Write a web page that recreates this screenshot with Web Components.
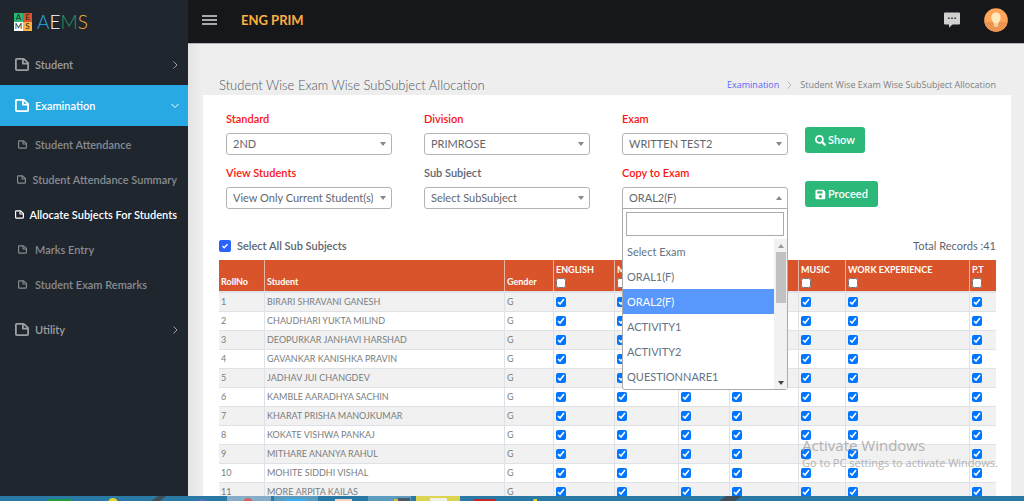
<!DOCTYPE html>
<html lang="en">
<head>
<meta charset="utf-8">
<meta name="viewport" content="width=device-width, initial-scale=1">
<title>AEMS - SubSubject Allocation</title>
<style>
  html, body { margin: 0; height: 100%; }
  body {
    --ui: Lato, "Open Sans", sans-serif;
    --side: #20262e;
    --brand: #28a9e3;
    --line: #dee2e6;
    font-family: var(--ui);
    font-size: 11px;
    color: #5c6570;
    overflow: hidden;
  }
</style>
</head>
<body>
<aems-app></aems-app>

<script>
const define = (name, html, setup) => customElements.define(name, class extends HTMLElement {
  constructor() {
    super();
    this.attachShadow({ mode: 'open' });
  }
  connectedCallback() {
    if (this.shadowRoot.childNodes.length) return;
    const t = document.createElement('template');
    t.innerHTML = typeof html === 'function' ? html(this) : html;
    this.shadowRoot.append(t.content.cloneNode(true));
    if (setup) setup(this);
  }
});

/* Document icon used across the menu */
define('aems-doc-icon', `
<style>
  :host { display: block; flex: none; }
  svg { display: block; width: 100%; height: 100%; }
</style>
<svg viewBox="0 0 14 13" fill="none" stroke="currentColor" stroke-width="1.800" stroke-linejoin="round">
  <path d="M1.800 .9h6.900l4.400 4v6.300q0 .9-.9.9H1.800q-.9 0-.9-.9V1.800q0-.9.9-.9z"/><path d="M7.900 1v4.700h5.200"/>
</svg>`);

define('aems-logo', `
<style>
  :host { display: flex; align-items: center; height: 44px; padding-left: 14px; gap: 5px; }
  .tiles { display: grid; grid-template-columns: 9px 9px; grid-auto-rows: 9px; line-height: 9px;
    font-size: 8px; text-align: center; color: #20262e; }
  .a { background: #2bb673; } .e { background: #d9542b; }
  .m { background: #fff; } .s { background: #fbb040; }
  .word { font-size: 19px; line-height: 22px; font-weight: 300; }
  .word span:nth-child(1) { color: #28a9e3; } .word span:nth-child(2) { color: #fff; }
  .word span:nth-child(3) { color: #1f9d63; } .word span:nth-child(4) { color: #fbb040; }
</style>
<div class="tiles" aria-hidden="true"><span class="a">A</span><span class="e">E</span><span class="m">M</span><span class="s">S</span></div>
<div class="word"><span>A</span><span>E</span><span>M</span><span>S</span></div>`);

define('aems-menu-item', el => `
<style>
  :host { display: block; color: #9b9fa4; }
  :host([active]) { background: var(--brand); color: #fff; }
  a { display: flex; align-items: center; height: 41px; padding: 0 9px 0 15px; color: inherit; text-decoration: none; font-size: 11px; font-weight: 600; }
  aems-doc-icon { width: 14px; height: 13px; margin-right: 6px; }
  span { flex: 1; }
  svg { width: 8px; height: 8px; }
</style>
<a href="#"><aems-doc-icon></aems-doc-icon><span><slot></slot></span>
<svg viewBox="0 0 8 8" fill="none" stroke="currentColor"><path d="${el.hasAttribute('active') ? 'M.5 2l3.500 3.500L7.500 2' : 'M2.500 .5L6 4L2.500 7.500'}"/></svg></a>`);

define('aems-submenu-item', `
<style>
  :host { display: block; color: #878c92; }
  :host([active]) { color: #fff; }
  a { display: flex; align-items: center; height: 35px; padding-left: 10px; color: inherit; text-decoration: none; font-size: 11px; font-weight: 600; white-space: nowrap; }
  .i { flex: 0 1 25px; min-width: 0; display: flex; justify-content: center; }
  aems-doc-icon { width: 9px; height: 9px; }
  .t { flex: none; padding-right: 11px; }
</style>
<a href="#"><span class="i"><aems-doc-icon></aems-doc-icon></span><span class="t"><slot></slot></span></a>`);

define('aems-sidebar', `
<style>
  :host { display: block; background: var(--side); overflow: hidden; }
  .sub { padding: 1px 0 7px; }
</style>
<aems-logo></aems-logo>
<nav>
  <aems-menu-item>Student</aems-menu-item>
  <aems-menu-item active>Examination</aems-menu-item>
  <div class="sub">
    <aems-submenu-item>Student Attendance</aems-submenu-item>
    <aems-submenu-item>Student Attendance Summary</aems-submenu-item>
    <aems-submenu-item active>Allocate Subjects For Students</aems-submenu-item>
    <aems-submenu-item>Marks Entry</aems-submenu-item>
    <aems-submenu-item>Student Exam Remarks</aems-submenu-item>
  </div>
  <aems-menu-item>Utility</aems-menu-item>
</nav>`);

define('aems-topbar', `
<style>
  :host { display: flex; flex: none; align-items: center; height: 40px; padding: 0 16px 3px 14px; border-bottom: 1px solid #b4b4b4; background: #15171b; color: #fbb040; }
  button { border: 0; padding: 0; background: none; display: block; }
  svg { display: block; }
  h1 { flex: 1; margin: 0 0 0 24px; font: 700 13px/18px var(--ui); }
  .chat { margin-right: 24px; }
</style>
<button aria-label="Toggle menu"><svg width="15" height="12" stroke="#dadada" stroke-width="1.500"><path d="M0 2h15M0 6h15M0 10h15"/></svg></button>
<h1>ENG PRIM</h1>
<button class="chat" aria-label="Messages"><svg width="16" height="16" viewBox="0 0 16 16"><path fill="#d0d0d0" d="M1 .5h14q1 0 1 1v10q0 1-1 1H8.500L5 15.800V12.500H1q-1 0-1-1v-10q0-1 1-1z"/><path fill="#333" d="M4 5.500h1.600v1.600H4zM7.200 5.500h1.600v1.600H7.200zM10.400 5.500H12v1.600h-1.600z"/></svg></button>
<button aria-label="Profile"><svg width="24" height="24" viewBox="0 0 24 24"><clipPath id="c"><circle cx="12" cy="12" r="11.800"/></clipPath><g clip-path="url(#c)"><path fill="#ffa55a" d="M0 0h24v24H0z"/><path fill="#eb9350" d="M0 14h24v10H0z"/></g><path fill="#ffe9bd" d="M12 4.500c3 0 4.700 2.300 4.700 5 0 3-2.200 4-2.400 6.300H9.700C9.500 13.500 7.300 12.500 7.300 9.500c0-2.700 1.700-5 4.700-5z"/><path fill="#f2cf94" d="M9.700 15.800h4.600v2.400l-1.300.9h-2l-1.300-.9z"/></svg></button>`);

define('aems-page-head', `
<style>
  :host { display: flex; align-items: center; justify-content: space-between; height: 20px; padding: 31px 15px 0 16px; white-space: nowrap; }
  h2 { margin: 0; font: 300 13px/20px var(--ui); color: #4d5666; }
  nav { display: flex; align-items: center; font: 9px/20px "Open Sans", sans-serif; color: #7c7f84; }
  a { color: #5867f5; text-decoration: none; }
  svg { width: 5px; height: 8px; margin: 0 8px; }
</style>
<h2>Student Wise Exam Wise SubSubject Allocation</h2>
<nav><a href="#">Examination</a><svg viewBox="0 0 5 8" fill="none" stroke="#bbb"><path d="M.5 .5L4 4L.5 7.500"/></svg><span>Student Wise Exam Wise SubSubject Allocation</span></nav>`);

/* Labelled drop-down; slotted content is shown as an open list below it */
define('aems-field', el => `
<style>
  :host { display: grid; grid-template-rows: 14px 22px; row-gap: 7px; position: relative; min-width: 0; }
  label { font-size: 11px; line-height: 14px; font-weight: 600; color: #5c6570; }
  :host([required]) label { color: #fb1414; }
  .box { display: grid; grid-template-columns: minmax(0, 1fr); align-items: center; }
  select { grid-area: 1 / 1; appearance: none; box-sizing: border-box; width: 100%; height: 22px; margin: 0; padding: 0 18px 0 6px; border: 1px solid #b3b3b3; border-radius: 3px; background: #fff; color: #62676d; font: 11px/20px var(--ui); }
  :host([open]) select { border-radius: 3px 3px 0 0; }
  svg { grid-area: 1 / 1; justify-self: end; width: 6px; height: 4px; margin-right: 6px; pointer-events: none; }
</style>
<label for="s">${el.getAttribute('label')}</label>
<div class="box"><select id="s"><option>${el.getAttribute('value')}</option></select>
<svg viewBox="0 0 6 4" fill="#888"><path d="${el.hasAttribute('open') ? 'M0 4h6L3 0z' : 'M0 0h6L3 4z'}"/></svg></div>
<slot></slot>`);

define('aems-option-list', el => `
<style>
  :host { display: block; position: absolute; z-index: 2; top: 42px; left: 0; right: 0; border: 1px solid #aaa; border-radius: 0 0 3px 3px; background: #fff; }
  input { display: block; box-sizing: border-box; width: calc(100% - 6px); height: 24px; margin: 3px; padding: 3px; border: 1px solid #aaa; background: #fff; font: 11px var(--ui); }
  .body { display: grid; grid-template-columns: 1fr 13px; }
  ul { margin: 0; padding: 0; list-style: none; }
  li { height: 25px; padding-left: 4px; font-size: 11px; line-height: 25px; color: #657383; }
  li[aria-selected=true] { background: #5897fb; color: #fff; }
  .bar { display: flex; flex-direction: column; align-items: center; background: #f1f1f1; }
  .bar i { width: 10px; height: 51px; background: #c1c1c1; }
  .bar svg { width: 6px; height: 4px; padding: 5px 0 4px; }
  .bar svg:last-child { margin-top: auto; }
</style>
<input type="search" aria-label="Search exams">
<div class="body">
  <ul role="listbox" aria-label="Exams">${['Select Exam', 'ORAL1(F)', 'ORAL2(F)', 'ACTIVITY1', 'ACTIVITY2', 'QUESTIONNARE1'].map(o => `<li role="option" aria-selected="${o === 'ORAL2(F)'}">${o}</li>`).join('')}</ul>
  <div class="bar" aria-hidden="true"><svg viewBox="0 0 6 4" fill="#999"><path d="M0 4h6L3 0z"/></svg><i></i><svg viewBox="0 0 6 4" fill="#444"><path d="M0 0h6L3 4z"/></svg></div>
</div>`);

define('aems-button', `
<style>
  :host { display: block; }
  button { display: flex; align-items: center; gap: 2px; height: 26px; padding: 0 10px; border: 0; border-radius: 3px; background: #2bb878; color: #fff; font: 600 11px/26px var(--ui); }
</style>
<button><slot name="icon"></slot><slot></slot></button>`);

define('aems-filters', `
<style>
  :host { display: flex; gap: 17px; padding: 17px 0 0 7px; }
  .fields { flex: 1; display: grid; grid-template-columns: repeat(3, minmax(0, 1fr)); gap: 11px 32px; }
  .actions { width: 191px; display: flex; flex-direction: column; align-items: flex-start; gap: 28px; padding-top: 15px; }
  svg { width: 11px; height: 11px; display: block; }
</style>
<div class="fields">
  <aems-field required label="Standard" value="2ND"></aems-field>
  <aems-field required label="Division" value="PRIMROSE"></aems-field>
  <aems-field required label="Exam" value="WRITTEN TEST2"></aems-field>
  <aems-field required label="View Students" value="View Only Current Student(s)"></aems-field>
  <aems-field label="Sub Subject" value="Select SubSubject"></aems-field>
  <aems-field required open label="Copy to Exam" value="ORAL2(F)"><aems-option-list></aems-option-list></aems-field>
</div>
<div class="actions">
  <aems-button><svg slot="icon" viewBox="0 0 11 11" fill="none" stroke="#fff"><circle cx="4.400" cy="4.400" r="3.500" stroke-width="1.800"/><path stroke-width="2.200" stroke-linecap="round" d="M7.300 7.300l2.500 2.500"/></svg>Show</aems-button>
  <aems-button><svg slot="icon" viewBox="0 0 11 11"><path fill="#fff" fill-rule="evenodd" d="M1.500.7h6.800l2 2v6.600q0 1-1 1h-7.800q-1 0-1-1V1.700q0-1 1-1zM2.200 2.200v2.300h5.300V2.200zM5.400 6a1.500 1.500 0 1 0 .01 0z"/></svg>Proceed</aems-button>
</div>`);

define('aems-list-head', `
<style>
  :host { display: flex; justify-content: space-between; align-items: center; height: 14px; margin: 30px 0 7px; font-size: 11px; line-height: 14px; font-weight: 600; }
  label { display: flex; align-items: center; gap: 6px; }
  .box { display: grid; place-items: center; }
  input, svg { grid-area: 1 / 1; }
  input { appearance: none; width: 12px; height: 12px; margin: 0; border-radius: 2px; background: #2962ff; }
  svg { width: 6px; height: 6px; pointer-events: none; }
  .total { font-weight: 400; }
</style>
<label><span class="box"><input type="checkbox" checked><svg viewBox="0 0 6 6" fill="none" stroke="#fff" stroke-width="1.400"><path d="M.5 3l1.700 1.700L5.500 1.200"/></svg></span>Select All Sub Subjects</label>
<span class="total">Total Records :41</span>`);

const students = ['BIRARI SHRAVANI GANESH', 'CHAUDHARI YUKTA MILIND', 'DEOPURKAR JANHAVI HARSHAD', 'GAVANKAR KANISHKA PRAVIN', 'JADHAV JUI CHANGDEV', 'KAMBLE AARADHYA SACHIN', 'KHARAT PRISHA MANOJKUMAR', 'KOKATE VISHWA PANKAJ', 'MITHARE ANANYA RAHUL', 'MOHITE SIDDHI VISHAL', 'MORE ARPITA KAILAS'];
const subjects = [['ENGLISH', 61], ['M', 64], ['', 51], ['', 69], ['MUSIC', 47], ['WORK EXPERIENCE', 124], ['P.T', 26]];

define('aems-students', `
<style>
  :host { display: block; }
  table { width: 100%; table-layout: fixed; border-collapse: separate; border-spacing: 0; font-size: 9px; line-height: 12px; color: #7a7d80; }
  th, td { box-sizing: border-box; padding: 0 0 0 2px; text-align: left; white-space: nowrap; border-right: 1px solid var(--line); }
  th:last-child, td:last-child { border-right: 0; }
  th { height: 31px; padding-bottom: 3px; background: #d9542b; color: #fff; vertical-align: bottom; font-weight: 700; border-color: #e8b5a4; }
  th label { display: block; }
  td { height: 19px; border-bottom: 1px solid var(--line); }
  tbody tr:first-child td { height: 21px; border-top: 2px solid var(--line); }
  tbody tr:nth-child(odd) { background: #f1f1f1; }
  input { display: block; width: 10px; height: 10px; margin: 0; }
  th input { margin-top: 2px; }
</style>
<table>
  <colgroup><col style="width:46px"><col><col style="width:49px">${subjects.map(s => `<col style="width:${s[1]}px">`).join('')}</colgroup>
  <thead><tr><th>RollNo</th><th>Student</th><th>Gender</th>${subjects.map(s => `<th><label>${s[0] || '&nbsp;'}<input type="checkbox"></label></th>`).join('')}</tr></thead>
  <tbody>${students.map((n, i) => `<tr><td>${i + 1}</td><td>${n}</td><td>G</td>${subjects.map(s => `<td><input type="checkbox" checked aria-label="${s[0]} for ${n}"></td>`).join('')}</tr>`).join('')}</tbody>
</table>`);

define('aems-card', `
<style>:host { display: block; background: #fff; padding: 0 15px 0 16px; }</style><slot></slot>`);

define('aems-watermark', `
<style>
  :host { display: block; position: absolute; right: 28px; bottom: 30px; width: 194px; color: #a8a8a8; opacity: .85; pointer-events: none; white-space: nowrap; font-family: "Open Sans", sans-serif; }
  p { margin: 0; font-size: 15px; line-height: 19px; }
  p + p { font-size: 11px; line-height: 16px; }
</style>
<p>Activate Windows</p><p>Go to PC settings to activate Windows.</p>`);

/* Top edge of the desktop task bar */
define('aems-taskbar', `
<style>:host { display: block; height: 5px; background: #2a7aa5; overflow: hidden; } svg { display: block; }</style>
<svg width="1024" height="5" aria-hidden="true">
  <path fill="#3f4f57" d="M158 0h8l-6 5h-9zM726 0h16l-7 5h-16z"/>
  <path fill="#1d9a3a" d="M48 3h23v2H48z"/><circle cx="113" cy="7" r="5" fill="#e6d92b"/><circle cx="202" cy="7" r="4" fill="#5a70c8"/>
  <path fill="#86aec8" d="M227 0h44v5h-44z"/><circle cx="248" cy="7" r="5" fill="#d6605c"/>
  <path fill="#5b9cc0" d="M274 0h44v5h-44zM368 0h43v5h-43z"/><path fill="#38b0f5" d="M286 3h20v2h-20z"/>
  <path fill="#f3d3c5" d="M335 3h17v2h-17z"/><path fill="#4b5a62" d="M398 2h12v3h-14z"/><path fill="#d4b34a" d="M394 3h4v2h-4z"/>
  <path fill="#ddd552" d="M416 0h44v5h-44z"/><path fill="#eef0e4" d="M430 2h17v3h-17z"/>
  <path fill="#c4282d" d="M474 3h22v2h-22z"/><path fill="#e6d92b" d="M534 3h3v2h-4z"/>
</svg>`);

define('aems-app', `
<style>
  :host { display: grid; grid-template: minmax(0, 1fr) auto / 188px minmax(0, 1fr); height: 100vh; position: relative; }
  main { display: flex; flex-direction: column; min-height: 0; overflow: hidden; background: linear-gradient(90deg, #e4e4e4, #eeeeee 14px); }
  .content { padding: 0 13px 0 15px; }
  aems-taskbar { grid-column: 1 / 3; }
</style>
<aems-sidebar></aems-sidebar>
<main>
  <aems-topbar></aems-topbar>
  <div class="content">
    <aems-page-head></aems-page-head>
    <aems-card>
      <aems-filters></aems-filters>
      <aems-list-head></aems-list-head>
      <aems-students></aems-students>
    </aems-card>
  </div>
</main>
<aems-taskbar></aems-taskbar>
<aems-watermark></aems-watermark>`);
</script>
</body>
</html>
